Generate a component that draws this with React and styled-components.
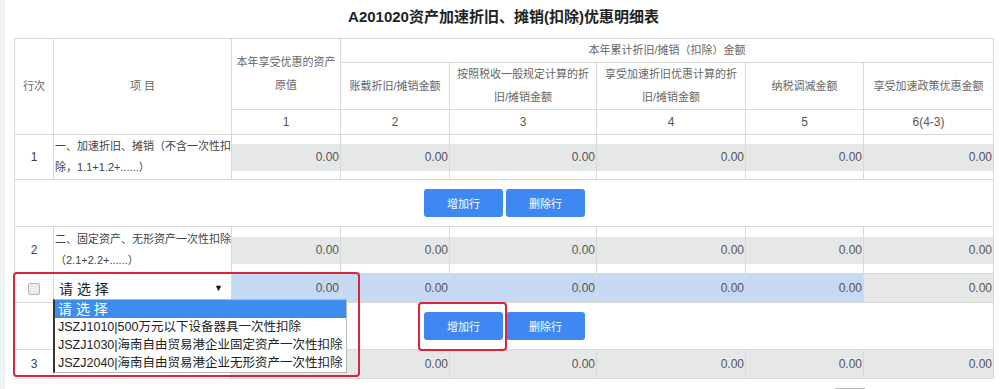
import React from 'react';
import styled, { createGlobalStyle } from 'styled-components';

const GlobalStyle = createGlobalStyle`
  html, body {
    margin: 0;
    padding: 0;
    background: #fff;
  }
  body {
    font-family: "Liberation Sans", "Noto Sans CJK SC", sans-serif;
  }
`

const Page = styled.div`
  width: 1000px;
  height: 389px;
  overflow: hidden;
  box-sizing: border-box;
  padding: 0 7px 0 14px;
  background: linear-gradient(to right, #eef2f5 0 5px, #fff 5px);
`

const Title = styled.h1`
  margin: 0;
  height: 38px;
  line-height: 33px;
  text-align: center;
  font-size: 15px;
  font-weight: bold;
  color: #222;
`

const Table = styled.table`
  width: 979px;
  border-collapse: collapse;
  table-layout: fixed;
`

const HeadCell = styled.th`
  border: 1px solid #d9d9d9;
  padding: 0 3px;
  font-size: 11px;
  font-weight: normal;
  line-height: 23px;
  color: #666;
  text-align: center;
  vertical-align: middle;
`

const IndexCell = styled.th`
  border: 1px solid #d9d9d9;
  padding: 0;
  font-size: 12px;
  font-weight: normal;
  color: #555;
  text-align: center;
`

const Row = styled.tr`
  height: ${(props) => props.$h}px;
`

const NoCell = styled.td`
  border: 1px solid #d9d9d9;
  padding: 0;
  font-size: 12px;
  color: #444;
  text-align: center;
  vertical-align: middle;
  position: relative;
`

const ItemCell = styled.td`
  border: 1px solid #d9d9d9;
  padding: 0 0 0 1px;
  font-size: 11px;
  line-height: 21px;
  color: #444;
  vertical-align: middle;
  position: relative;
`

const ValueCell = styled.td`
  border: 1px solid #d9d9d9;
  padding: 0;
  vertical-align: middle;
`

const Amount = styled.div`
  height: ${(props) => (props.$fill ? 28 : 27)}px;
  line-height: ${(props) => (props.$fill ? 28 : 27)}px;
  padding-right: 1px;
  background: ${(props) => (props.$tone === 'blue' ? '#c6d9f4' : '#e6e8e8')};
  font-size: 12px;
  color: #555;
  text-align: right;
`

const ButtonCell = styled.td`
  border: 1px solid #d9d9d9;
  padding: 0;
  text-align: center;
  vertical-align: middle;
`

const ButtonGroup = styled.div`
  display: inline-flex;
  gap: 3px;
  margin-left: 1px;
`

const ActionButton = styled.button`
  width: 79px;
  height: 28px;
  border: none;
  border-radius: 3px;
  background: #3f88f3;
  color: #fff;
  font-family: inherit;
  font-size: 11px;
  padding: 0;
`

const Marked = styled.span`
  position: relative;
  display: inline-flex;
`

const ButtonMark = styled.span`
  position: absolute;
  top: -10px;
  left: -6px;
  right: -4px;
  bottom: -11px;
  border: 2.5px solid #d9243c;
  border-radius: 4px;
  pointer-events: none;
`

const RowMark = styled.div`
  position: absolute;
  top: -2px;
  left: -2px;
  width: 343px;
  height: 101px;
  border: 2.5px solid #d9243c;
  border-radius: 4px;
  pointer-events: none;
  z-index: 3;
`

const Check = styled.span`
  display: inline-block;
  width: 10px;
  height: 10px;
  border: 1px solid #b5b5b5;
  border-radius: 2px;
  background: #ececec;
  vertical-align: middle;
`

const SelectCell = styled.td`
  border: 1px solid #d9d9d9;
  border-left: 1px solid #333;
  padding: 0;
  position: relative;
  background: #fff;
`

const SelectBox = styled.div`
  height: 26px;
  display: flex;
  align-items: center;
  justify-content: space-between;
  padding: 0 8px 0 5px;
  font-size: 14px;
  color: #222;
`

const Caret = styled.span`
  font-size: 9px;
  color: #111;
`

const OptionList = styled.ul`
  position: absolute;
  top: 25px;
  left: -1px;
  width: 294px;
  margin: 0;
  padding: 0;
  list-style: none;
  background: #fff;
  border: 1px solid #b9b9b9;
  border-left: 2px solid #333;
  box-sizing: border-box;
  overflow: hidden;
  z-index: 2;
`

const Option = styled.li`
  height: 18px;
  line-height: 18px;
  padding-left: 3px;
  font-size: ${(props) => (props.$active ? 14 : 12.5)}px;
  white-space: nowrap;
  color: ${(props) => (props.$active ? '#fff' : '#222')};
  background: ${(props) => (props.$active ? '#3c8ded' : 'transparent')};
`

const Footer = styled.div`
  display: flex;
  justify-content: flex-end;
  padding-right: 128px;
  margin-top: 9px;
`

const PageBox = styled.div`
  width: 28px;
  height: 20px;
  border: 1px solid #bbb;
`

const columns = [39, 178, 109, 109, 147, 149, 118, 130];

const options = [
  '请 选 择',
  'JSZJ1010|500万元以下设备器具一次性扣除',
  'JSZJ1030|海南自由贸易港企业固定资产一次性扣除',
  'JSZJ2040|海南自由贸易港企业无形资产一次性扣除',
];

// covered: index of a cell hidden under the open dropdown
function Amounts({ tones = [], fill, covered }) {
  return [0, 1, 2, 3, 4, 5].map((i) => (
    <ValueCell key={i}>
      <Amount $tone={tones[i]} $fill={fill}>{i === covered ? '' : '0.00'}</Amount>
    </ValueCell>
  ));
}

function ButtonRow({ marked }) {
  const add = <ActionButton>增加行</ActionButton>;
  return (
    <Row $h={47}>
      <ButtonCell colSpan={8}>
        <ButtonGroup>
          {marked ? (
            <Marked>
              {add}
              <ButtonMark />
            </Marked>
          ) : add}
          <ActionButton>删除行</ActionButton>
        </ButtonGroup>
      </ButtonCell>
    </Row>
  );
}

export default function App() {
  return (
    <Page>
      <GlobalStyle />
      <Title>A201020资产加速折旧、摊销(扣除)优惠明细表</Title>
      <Table>
        <colgroup>
          {columns.map((w, i) => <col key={i} style={{ width: w }} />)}
        </colgroup>
        <thead>
          <Row $h={24}>
            <HeadCell rowSpan={3}>行次</HeadCell>
            <HeadCell rowSpan={3}>项 目</HeadCell>
            <HeadCell rowSpan={2}>本年享受优惠的资产原值</HeadCell>
            <HeadCell colSpan={5}>本年累计折旧/摊销（扣除）金额</HeadCell>
          </Row>
          <Row $h={46}>
            <HeadCell>账载折旧/摊销金额</HeadCell>
            <HeadCell>按照税收一般规定计算的折旧/摊销金额</HeadCell>
            <HeadCell>享受加速折旧优惠计算的折旧/摊销金额</HeadCell>
            <HeadCell>纳税调减金额</HeadCell>
            <HeadCell>享受加速政策优惠金额</HeadCell>
          </Row>
          <Row $h={25}>
            {['1', '2', '3', '4', '5', '6(4-3)'].map((n) => (
              <IndexCell key={n}>{n}</IndexCell>
            ))}
          </Row>
        </thead>
        <tbody>
          <Row $h={45}>
            <NoCell>1</NoCell>
            <ItemCell>一、加速折旧、摊销（不含一次性扣除，1.1+1.2+......）</ItemCell>
            <Amounts />
          </Row>
          <ButtonRow />
          <Row $h={47}>
            <NoCell>2</NoCell>
            <ItemCell>二、固定资产、无形资产一次性扣除（2.1+2.2+......）</ItemCell>
            <Amounts />
          </Row>
          <Row $h={28}>
            <NoCell>
              <Check />
              <RowMark />
            </NoCell>
            <SelectCell>
              <SelectBox>
                <span>请 选 择</span>
                <Caret>▼</Caret>
              </SelectBox>
              <OptionList>
                {options.map((o, i) => (
                  <Option key={o} $active={i === 0}>{o}</Option>
                ))}
              </OptionList>
            </SelectCell>
            <Amounts fill tones={['blue', 'blue', 'blue', 'blue', 'blue']} />
          </Row>
          <ButtonRow marked />
          <Row $h={29}>
            <NoCell>3</NoCell>
            <ItemCell />
            <Amounts fill covered={0} />
          </Row>
        </tbody>
      </Table>
      <Footer>
        <PageBox />
      </Footer>
    </Page>
  );
}
